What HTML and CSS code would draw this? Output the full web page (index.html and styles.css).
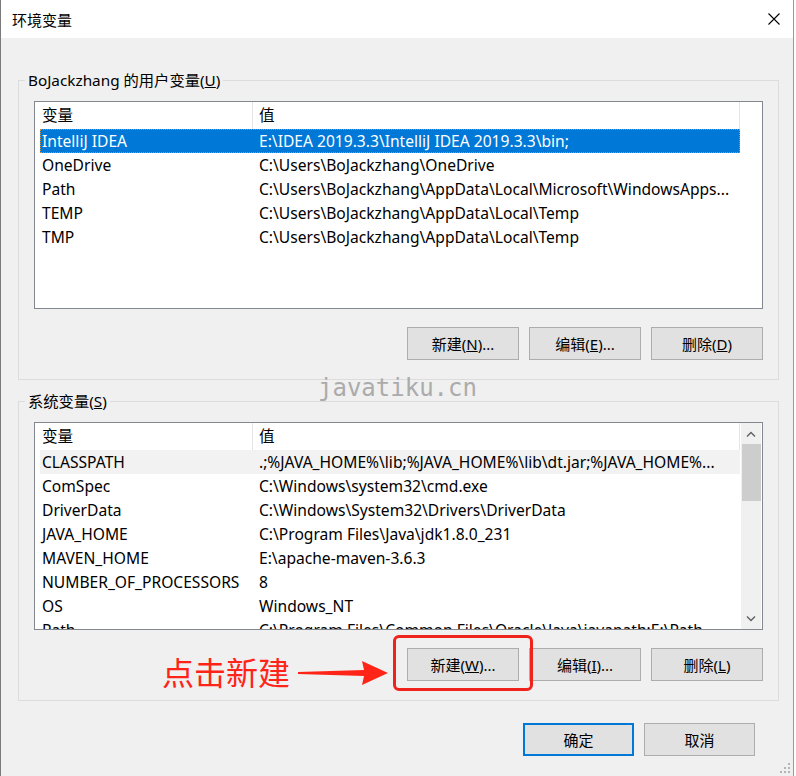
FILE: index.html
```html
<!DOCTYPE html>
<html lang="zh-CN">
<head>
  <meta charset="UTF-8" />
  <title>环境变量</title>
  <link rel="stylesheet" href="styles.css">
</head>
<body>
  <div class="window">
    <div class="titlebar">
      <span class="title">环境变量</span>
      <svg class="close" width="12" height="12" viewBox="0 0 12 12">
        <path d="M0.5 0.5 L11.5 11.5 M11.5 0.5 L0.5 11.5" stroke="#000" stroke-width="1.1" fill="none"/>
      </svg>
    </div>

    <div class="content">
      <fieldset class="group user-group">
        <legend>BoJackzhang 的用户变量(<u>U</u>)</legend>
        <div class="list">
          <div class="list-main">
            <div class="list-head">
              <div class="head-cell head-name">变量</div>
              <div class="head-cell head-value">值</div>
            </div>
            <div class="rows">
              <div class="row selected"><span class="cell">IntelliJ IDEA</span><span class="cell">E:\IDEA 2019.3.3\IntelliJ IDEA 2019.3.3\bin;</span></div>
              <div class="row"><span class="cell">OneDrive</span><span class="cell">C:\Users\BoJackzhang\OneDrive</span></div>
              <div class="row"><span class="cell">Path</span><span class="cell">C:\Users\BoJackzhang\AppData\Local\Microsoft\WindowsApps...</span></div>
              <div class="row"><span class="cell">TEMP</span><span class="cell">C:\Users\BoJackzhang\AppData\Local\Temp</span></div>
              <div class="row"><span class="cell">TMP</span><span class="cell">C:\Users\BoJackzhang\AppData\Local\Temp</span></div>
            </div>
          </div>
        </div>
        <div class="buttons">
          <button class="btn">新建(<u>N</u>)...</button>
          <button class="btn">编辑(<u>E</u>)...</button>
          <button class="btn">删除(<u>D</u>)</button>
        </div>
      </fieldset>

      <fieldset class="group system-group">
        <legend>系统变量(<u>S</u>)</legend>
        <div class="list">
          <div class="list-main">
            <div class="list-head">
              <div class="head-cell head-name">变量</div>
              <div class="head-cell head-value">值</div>
            </div>
            <div class="rows">
              <div class="row hover"><span class="cell">CLASSPATH</span><span class="cell">.;%JAVA_HOME%\lib;%JAVA_HOME%\lib\dt.jar;%JAVA_HOME%...</span></div>
              <div class="row"><span class="cell">ComSpec</span><span class="cell">C:\Windows\system32\cmd.exe</span></div>
              <div class="row"><span class="cell">DriverData</span><span class="cell">C:\Windows\System32\Drivers\DriverData</span></div>
              <div class="row"><span class="cell">JAVA_HOME</span><span class="cell">C:\Program Files\Java\jdk1.8.0_231</span></div>
              <div class="row"><span class="cell">MAVEN_HOME</span><span class="cell">E:\apache-maven-3.6.3</span></div>
              <div class="row"><span class="cell">NUMBER_OF_PROCESSORS</span><span class="cell">8</span></div>
              <div class="row"><span class="cell">OS</span><span class="cell">Windows_NT</span></div>
              <div class="row"><span class="cell">Path</span><span class="cell">C:\Program Files\Common Files\Oracle\Java\javapath;E:\Path...</span></div>
            </div>
          </div>
          <div class="scrollbar">
            <svg class="arrow" width="10" height="6" viewBox="0 0 10 6"><path d="M1 5.5 L5 1.5 L9 5.5" stroke="#606060" stroke-width="1.4" fill="none"/></svg>
            <div class="thumb"></div>
            <div class="track"></div>
            <svg class="arrow" width="10" height="6" viewBox="0 0 10 6"><path d="M1 0.5 L5 4.5 L9 0.5" stroke="#606060" stroke-width="1.4" fill="none"/></svg>
          </div>
        </div>
        <div class="buttons">
          <button class="btn">新建(<u>W</u>)...</button>
          <button class="btn">编辑(<u>I</u>)...</button>
          <button class="btn">删除(<u>L</u>)</button>
        </div>
      </fieldset>
    </div>

    <div class="footer">
      <button class="btn btn-default">确定</button>
      <button class="btn">取消</button>
      <svg class="grip" width="11" height="11" viewBox="0 0 11 11" fill="#b4b4b4">
        <rect x="8" y="0" width="2" height="2"/>
        <rect x="4" y="4" width="2" height="2"/><rect x="8" y="4" width="2" height="2"/>
        <rect x="0" y="8" width="2" height="2"/><rect x="4" y="8" width="2" height="2"/><rect x="8" y="8" width="2" height="2"/>
      </svg>
    </div>

    <!-- overlays: watermark and red annotation -->
    <div class="watermark">javatiku.cn</div>
    <div class="note">点击新建</div>
    <svg class="note-arrow" width="92" height="26" viewBox="0 0 92 26">
      <path d="M0 12 L66 10 L64 1 L90 13 L64 25 L66 16 L0 14 Z" fill="#ff2418"/>
    </svg>
    <div class="note-box"></div>
  </div>
</body>
</html>
```

FILE: styles.css
```css
* {
  box-sizing: border-box;
  margin: 0;
  padding: 0;
}

body {
  background-color: #fff;
  font-family: "Noto Sans", "Noto Sans CJK SC", sans-serif;
  font-size: 15px;
  color: #000;
}

.window {
  position: relative;
  width: 794px;
  height: 776px;
  background-color: #f0f0f0;
  border-left: 1px solid #7a7a7a;
  border-right: 1px solid #9a9a9a;
  display: flex;
  flex-direction: column;
}

.titlebar {
  height: 38px;
  background-color: #fff;
  display: flex;
  align-items: center;
  justify-content: space-between;
  padding: 0 13px 0 11px;
  flex-shrink: 0;
}

.title {
  font-size: 15px;
}

.content {
  padding: 32px 14px 0 17px;
  display: flex;
  flex-direction: column;
  gap: 11px;
}

.group {
  border: 1px solid #dcdcdc;
  padding: 11px 15px 19px 15px;
  min-width: 0;
}

.group legend {
  margin-left: -9px;
  padding: 0 3px;
  line-height: 20px;
  font-size: 15.3px;
}

.list {
  height: 208px;
  border: 1px solid #828790;
  background-color: #fff;
  display: flex;
  overflow: hidden;
}

.list-main {
  width: 705px;
  display: flex;
  flex-direction: column;
  overflow: hidden;
  font-size: 15.6px;
}

.list-head {
  display: grid;
  grid-template-columns: 218px 487px;
  height: 27px;
  flex-shrink: 0;
}

.head-cell {
  border-right: 1px solid #e5e5e5;
  line-height: 27px;
}

.head-name {
  padding-left: 7px;
}

.head-value {
  padding-left: 6px;
}

.rows {
  padding-left: 5px;
}

.row {
  display: grid;
  grid-template-columns: 217px 1fr;
  height: 24px;
  line-height: 24px;
}

.cell {
  padding-left: 2px;
  white-space: nowrap;
  overflow: hidden;
}

.row.selected {
  background-color: #0078d7;
  color: #fff;
  outline: 1px dotted #d08a3c;
  outline-offset: -1px;
}

.row.hover {
  background-color: #f2f2f2;
}

.scrollbar {
  width: 20px;
  margin-left: 1px;
  background-color: #f0f0f0;
  display: flex;
  flex-direction: column;
  align-items: center;
}

.scrollbar .arrow {
  margin: 8px 0 7px;
  flex-shrink: 0;
}

.thumb {
  width: 19px;
  height: 57px;
  background-color: #cdcdcd;
  flex-shrink: 0;
}

.track {
  flex: 1;
}

.buttons {
  display: flex;
  justify-content: flex-end;
  gap: 10px;
  margin-top: 18px;
}

.btn {
  width: 112px;
  height: 33px;
  background-color: #e1e1e1;
  border: 1px solid #adadad;
  font-family: "Noto Sans", "Noto Sans CJK SC", sans-serif;
  font-size: 15px;
  color: #000;
}

.footer {
  display: flex;
  justify-content: flex-end;
  align-items: flex-start;
  gap: 10px;
  padding: 22px 0 0 0;
  flex: 1;
}

.footer .btn {
  width: 111px;
}

.btn-default {
  border: 2px solid #0078d7;
}

.grip {
  align-self: flex-end;
  margin: 0 2px 2px 15px;
}

.watermark {
  position: absolute;
  left: 317px;
  top: 374px;
  font-family: "DejaVu Sans Mono", monospace;
  font-size: 24px;
  line-height: 28px;
  color: #ababab;
}

.note {
  position: absolute;
  left: 161px;
  top: 650px;
  font-family: "Noto Sans CJK SC", sans-serif;
  font-size: 32px;
  line-height: 42px;
  color: #ff2418;
}

.note-arrow {
  position: absolute;
  left: 297px;
  top: 660px;
}

.note-box {
  position: absolute;
  left: 392px;
  top: 635px;
  width: 140px;
  height: 56px;
  border: 3px solid #f0231c;
  border-radius: 6px;
}
```
